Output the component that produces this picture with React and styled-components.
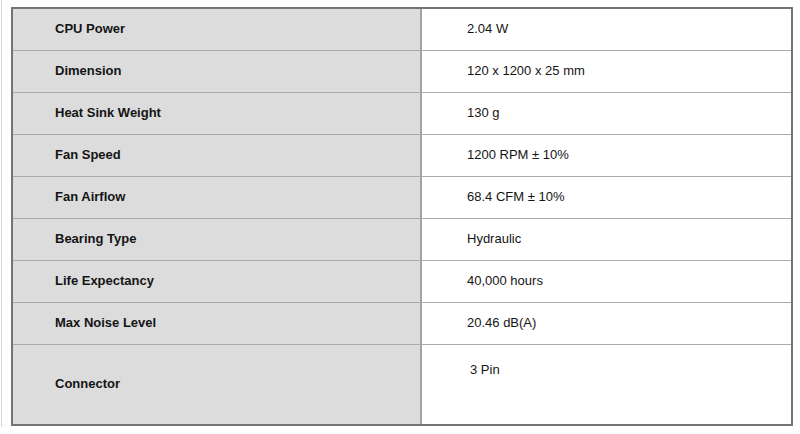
import styled, { createGlobalStyle } from "styled-components";

const GlobalStyle = createGlobalStyle`
  html, body {
    margin: 0;
    padding: 0;
    background: #fff;
  }
  body {
    font-family: "Liberation Sans", Arial, sans-serif;
  }
`;

const specs = [
  { label: "CPU Power", value: "2.04 W" },
  { label: "Dimension", value: "120 x 1200 x 25 mm" },
  { label: "Heat Sink Weight", value: "130 g" },
  { label: "Fan Speed", value: "1200 RPM ± 10%" },
  { label: "Fan Airflow", value: "68.4 CFM ± 10%" },
  { label: "Bearing Type", value: "Hydraulic" },
  { label: "Life Expectancy", value: "40,000 hours" },
  { label: "Max Noise Level", value: "20.46 dB(A)" },
  { label: "Connector", value: "3 Pin", tall: true },
];

const Page = styled.div`
  margin-left: 1px;
  border-left: 1px solid #d6d6d6;
  padding: 7px 0 0 9px;
  height: 427px;
  box-sizing: border-box;
`;

const Table = styled.table`
  width: 782px;
  border: 2px solid #747474;
  border-spacing: 0;
  table-layout: fixed;
`;

const Row = styled.tr`
  height: ${(p) => (p.$tall ? "79px" : "42px")};
`;

const Cell = styled.td`
  box-sizing: border-box;
  padding: 0 0 2px;
  font-size: 13px;
  line-height: 15px;
  color: #141414;
  border-bottom: ${(p) => (p.$last ? "none" : "1px solid #a9a9a9")};
`;

const Label = styled(Cell)`
  width: 409px;
  background: #dcdcdc;
  font-weight: bold;
  padding-left: 42px;
  border-right: 2px solid #a2a2a2;
  vertical-align: middle;
`;

const Value = styled(Cell)`
  background: #fff;
  padding-left: ${(p) => (p.$tall ? "48px" : "45px")};
  padding-top: ${(p) => (p.$tall ? "17px" : "0")};
  vertical-align: ${(p) => (p.$tall ? "top" : "middle")};
`;

export default function App() {
  return (
    <>
      <GlobalStyle />
      <Page>
        <Table>
          <tbody>
            {specs.map((s, i) => {
              const last = i === specs.length - 1;
              return (
                <Row key={s.label} $tall={s.tall}>
                  <Label $last={last}>{s.label}</Label>
                  <Value $last={last} $tall={s.tall}>
                    {s.value}
                  </Value>
                </Row>
              );
            })}
          </tbody>
        </Table>
      </Page>
    </>
  );
}
